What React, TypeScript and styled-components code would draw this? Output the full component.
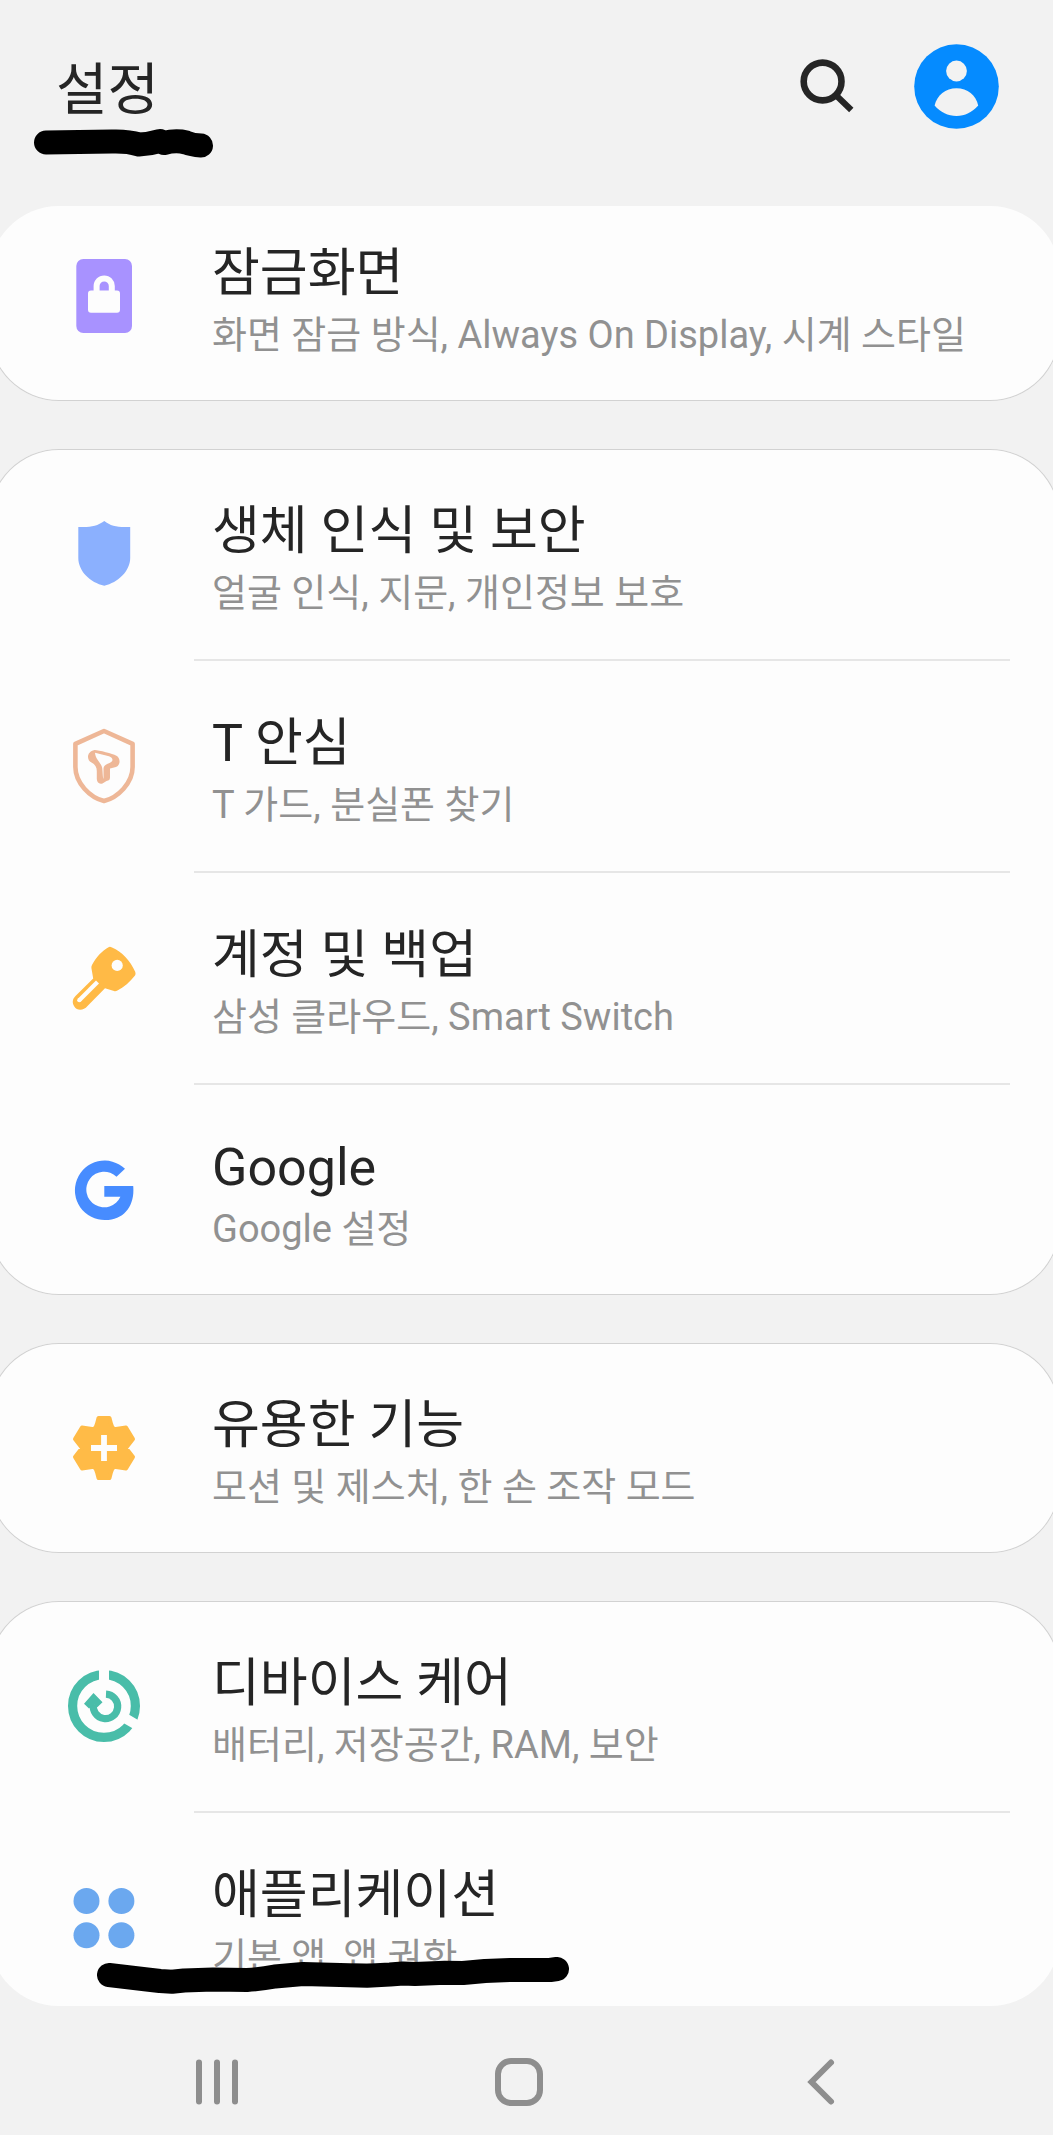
import React from 'react';
import styled, { createGlobalStyle, css } from 'styled-components';

const colors = {
  page: '#f2f2f2',
  card: '#fdfdfd',
  outline: '#d2d2d2',
  divider: '#e6e6e6',
  title: '#252525',
  summary: '#919191',
  nav: '#8e8e8e',
};

const GlobalStyle = createGlobalStyle`
  *, *::before, *::after { box-sizing: border-box; }
  body {
    margin: 0;
    background: ${colors.page};
    color: ${colors.title};
    font-family: Roboto, "Noto Sans CJK KR", sans-serif;
  }
`;

const Screen = styled.div`
  display: flex;
  flex-direction: column;
  height: 100vh;
  overflow: hidden;
`;

const Header = styled.header`
  position: relative;
  flex: none;
  display: flex;
  align-items: center;
  gap: 54px;
  height: 206px;
  padding: 0 54px 34px 56px;
`;

const Heading = styled.h1`
  flex: 1;
  margin: 0;
  padding-top: 8px;
  font-size: 56px;
  line-height: 64px;
  font-weight: 400;
`;

const IconButton = styled.button<{ $size: number }>`
  display: block;
  width: ${({ $size }) => $size}px;
  height: ${({ $size }) => $size}px;
  padding: 0;
  border: 0;
  border-radius: 50%;
  background: none;
  cursor: pointer;

  svg {
    display: block;
    width: 100%;
    height: 100%;
  }
`;

const ListViewport = styled.main`
  flex: 1;
  min-height: 0;
  margin: 0 -7px 0 -11px;
  border-radius: 70px;
  overflow: hidden;
`;

const Groups = styled.div`
  display: flex;
  flex-direction: column;
  gap: 48px;
  margin-top: -15px;
`;

const Card = styled.ul`
  flex: none;
  margin: 0;
  padding: 0;
  list-style: none;
  border-radius: 70px;
  background: ${colors.card};
  box-shadow: inset 0 0 0 1px ${colors.outline};
`;

const Item = styled.li`
  position: relative;

  &:not(:last-child)::after {
    content: '';
    display: block;
    height: 2px;
    margin: 0 50px 0 205px;
    background: ${colors.divider};
  }
`;

const ItemLink = styled.a`
  display: flex;
  align-items: center;
  gap: 68px;
  height: 210px;
  padding: 0 50px 0 75px;
  color: inherit;
  text-decoration: none;

  svg {
    flex: none;
    width: 80px;
    height: 80px;
  }
`;

const Labels = styled.span`
  display: flex;
  flex-direction: column;
  min-width: 0;
  padding-top: 14px;
  white-space: nowrap;
`;

const ItemTitle = styled.span`
  font-size: 52px;
  line-height: 64px;
`;

const ItemSummary = styled.span`
  color: ${colors.summary};
  font-size: 38px;
  line-height: 58px;
`;

const NavBar = styled.nav`
  flex: none;
  display: flex;
  height: 129px;
  padding: 22px 81px 0 66px;
`;

const NavButton = styled.button`
  flex: 1;
  display: flex;
  align-items: center;
  justify-content: center;
  padding: 0;
  border: 0;
  background: none;
  color: ${colors.nav};
  cursor: pointer;

  svg {
    width: 56px;
    height: 56px;
  }
`;

const strokeBase = css`
  position: absolute;
  pointer-events: none;
  fill: none;
  stroke: #000;
  stroke-width: 24px;
  stroke-linecap: round;
  stroke-linejoin: round;
`;

const HeadingMarker = styled.svg`
  ${strokeBase}
  left: 34px;
  top: 128px;
  width: 180px;
  height: 32px;
`;

const ItemMarker = styled.svg`
  ${strokeBase}
  left: 108px;
  top: 144px;
  width: 474px;
  height: 40px;
`;

const SearchIcon = () => (
  <svg viewBox="0 0 64 64" fill="none" stroke="#252525" aria-hidden="true">
    <circle cx="26.6" cy="27.5" r="18.9" strokeWidth="6.6" />
    <path d="M40 41.2 L55.3 56" strokeWidth="6.2" />
  </svg>
);

const AvatarIcon = () => (
  <svg viewBox="0 0 85 85" aria-hidden="true">
    <circle cx="42.5" cy="42.5" r="42.3" fill="#058bff" />
    <circle cx="42.5" cy="27" r="10.4" fill="#f2f2f2" />
    <path
      d="M20.6 61.6 C23 51 31.5 44.3 42.5 44.3 C53.5 44.3 62 51 64.2 61.6 C58 68.5 51 72 42.5 72 C34 72 26.5 68.5 20.6 61.6 Z"
      fill="#f2f2f2"
    />
  </svg>
);

const LockIcon = () => (
  <svg viewBox="0 0 80 80" aria-hidden="true">
    <rect x="12.3" y="3" width="55.7" height="74" rx="7" fill="#a892ff" />
    <rect x="24" y="34.5" width="32" height="22.3" rx="3" fill="#fdfdfd" />
    <path d="M32.6 37 V30 a7.6 7.6 0 0 1 15.2 0 V37" fill="none" stroke="#fdfdfd" strokeWidth="6" />
  </svg>
);

const ShieldIcon = () => (
  <svg viewBox="0 0 80 80" aria-hidden="true">
    <path
      d="M40.3 7 C33 12.5 25 13.6 14.3 12.9 V44 C14.3 57 26 68.5 40.3 71.8 C54 68.5 66.2 57 66.2 44 V12.9 C55 13.6 47 12.5 40.3 7 Z"
      fill="#8bb0fe"
    />
  </svg>
);

const TShieldIcon = () => (
  <svg viewBox="0 0 80 80" aria-hidden="true">
    <path
      d="M40 5 L68.6 17.8 V41 C68.6 57 54 71.5 40 75 C26 71.5 11.4 57 11.4 41 V17.8 Z"
      fill="none"
      stroke="#eeb797"
      strokeWidth="4.6"
      strokeLinejoin="round"
    />
    <path
      d="M30.5 24 C34 23.8 49 28 52 29.5 C57 32 56.5 39.5 52 41 L46 42.5 V51 C46 54 45 54.5 42.5 55 L38.5 57.5 C34.5 58.5 33 56 32.8 53 V45 C32.8 41 31 38.5 27.5 36.5 C22 33.5 23 25.5 30.5 24 Z"
      fill="#eeb797"
    />
    <path
      d="M31 26.8 L45 30.2 C49 31.5 50 35 45.5 37 C40 39 39.5 40.5 39.5 44 V53 C38.6 51 38.8 46 38.2 42 C37.2 36.5 31.5 34 31 26.8 Z"
      fill="#fdfdfd"
    />
  </svg>
);

const KeyIcon = () => (
  <svg viewBox="0 0 80 80" aria-hidden="true">
    <path
      d="M44.5 9.2 Q46 8.4 48 9.5 C58 14 66 22 71.3 34 Q72 36 71 37.5 C66 44 60 49 53 52.7 Q51.5 53.5 50 53 L41 50.3 L23.5 68 C19.5 73 13 73 10.3 68.5 C7.8 64.5 8.5 61 11.5 58 L29.2 40.5 L27.4 30 Q27.2 28.5 28 27 C32 19 38 13 44.5 9.2 Z"
      fill="#ffba46"
    />
    <circle cx="53.2" cy="27.4" r="5.6" fill="#fdfdfd" />
    <path d="M15.3 62.2 L33.5 44" stroke="#fdfdfd" strokeWidth="4.2" />
    <circle cx="15.3" cy="62.2" r="2.1" fill="#fdfdfd" />
  </svg>
);

const GoogleIcon = () => (
  <svg viewBox="0 0 80 80" aria-hidden="true">
    <path
      d="M61 18.7 L52.5 26.7 A17.8 17.8 0 1 0 56.4 46.7 H40.3 V36 H69.2 C71 55 60.5 70 41.3 70 A29.7 29.7 0 1 1 61 18.7 Z"
      fill="#478cff"
    />
  </svg>
);

const GearIcon = () => (
  <svg viewBox="0 0 80 80" aria-hidden="true">
    <path
      d="M34.5 10 H45.5 C47 16 48 22 52 21 L62 19.5 L69 31 L62 40 L69 49 L62 60.5 L52 59 C48 58 47 64 45.5 70 H34.5 C33 64 32 58 28 59 L18 60.5 L11 49 L18 40 L11 31 L18 19.5 L28 21 C32 22 33 16 34.5 10 Z"
      fill="#ffbb47"
      stroke="#ffbb47"
      strokeWidth="4"
      strokeLinejoin="round"
    />
    <path d="M27 40 H53 M40 27 V53" stroke="#fdfdfd" strokeWidth="5.8" />
  </svg>
);

const DeviceCareIcon = () => (
  <svg viewBox="0 0 80 80" fill="none" aria-hidden="true">
    <circle cx="40" cy="40" r="31.4" stroke="#49bda9" strokeWidth="9.2" />
    <path d="M40 16 V0 M58 50.4 L78 62" stroke="#fdfdfd" strokeWidth="10" />
    <path d="M42 28.2 A12.2 12.2 0 1 1 29.5 38" stroke="#49bda9" strokeWidth="7.2" />
    <path d="M20 37.7 L29.5 27 L38.5 36.3 L33.3 41.3 L30 38.5 L25 42.5 Z" fill="#49bda9" />
  </svg>
);

const AppsIcon = () => (
  <svg viewBox="0 0 80 80" fill="#6ba8ef" aria-hidden="true">
    <circle cx="22.5" cy="23" r="13" />
    <circle cx="57.4" cy="23" r="13" />
    <circle cx="22.5" cy="57.3" r="13" />
    <circle cx="57.4" cy="57.3" r="13" />
  </svg>
);

interface Entry {
  id: string;
  title: string;
  summary: string;
  icon: React.ReactNode;
  marked?: boolean;
}

const groups: Entry[][] = [
  [
    {
      id: 'lock',
      title: '잠금화면',
      summary: '화면 잠금 방식, Always On Display, 시계 스타일',
      icon: <LockIcon />,
    },
  ],
  [
    { id: 'security', title: '생체 인식 및 보안', summary: '얼굴 인식, 지문, 개인정보 보호', icon: <ShieldIcon /> },
    { id: 't-safe', title: 'T 안심', summary: 'T 가드, 분실폰 찾기', icon: <TShieldIcon /> },
    { id: 'accounts', title: '계정 및 백업', summary: '삼성 클라우드, Smart Switch', icon: <KeyIcon /> },
    { id: 'google', title: 'Google', summary: 'Google 설정', icon: <GoogleIcon /> },
  ],
  [{ id: 'features', title: '유용한 기능', summary: '모션 및 제스처, 한 손 조작 모드', icon: <GearIcon /> }],
  [
    { id: 'care', title: '디바이스 케어', summary: '배터리, 저장공간, RAM, 보안', icon: <DeviceCareIcon /> },
    { id: 'apps', title: '애플리케이션', summary: '기본 앱, 앱 권한', icon: <AppsIcon />, marked: true },
  ],
];

export default function App() {
  return (
    <Screen>
      <GlobalStyle />
      <Header>
        <Heading>설정</Heading>
        <IconButton type="button" $size={64} aria-label="검색">
          <SearchIcon />
        </IconButton>
        <IconButton type="button" $size={85} aria-label="내 프로필">
          <AvatarIcon />
        </IconButton>
        <HeadingMarker viewBox="34 128 180 32" aria-hidden="true">
          <path d="M46 142.5 L112 141.5 Q128 141 139 144.5 Q150 144 160 141 L164 143 Q176 140 186 142.5 Q192 145 201 145.5" />
        </HeadingMarker>
      </Header>

      <ListViewport>
        <Groups>
          {groups.map((group) => (
            <Card key={group[0].id}>
              {group.map((entry) => (
                <Item key={entry.id}>
                  <ItemLink href={`#${entry.id}`}>
                    {entry.icon}
                    <Labels>
                      <ItemTitle>{entry.title}</ItemTitle>
                      <ItemSummary>{entry.summary}</ItemSummary>
                    </Labels>
                  </ItemLink>
                  {entry.marked && (
                    <ItemMarker viewBox="97 1957 474 40" aria-hidden="true">
                      <path d="M109 1975 L147 1979.5 L160 1981 L172 1981.7 L184 1980.5 L213 1979.5 L247 1980 Q262 1979 275 1976.5 L303 1974 L340 1975 L367 1975.7 L390 1974.5 L403 1973.5 L415 1974 L445 1972.7 L463 1973 L485 1971 L510 1970 H550 L557 1969" />
                    </ItemMarker>
                  )}
                </Item>
              ))}
            </Card>
          ))}
        </Groups>
      </ListViewport>

      <NavBar aria-label="시스템 탐색">
        <NavButton type="button" aria-label="최근 앱">
          <svg viewBox="0 0 56 56" fill="none" stroke="currentColor" strokeWidth="6" strokeLinecap="round" aria-hidden="true">
            <path d="M10 8.5 V47.5 M28 8.5 V47.5 M46 8.5 V47.5" />
          </svg>
        </NavButton>
        <NavButton type="button" aria-label="홈">
          <svg viewBox="0 0 56 56" fill="none" stroke="currentColor" strokeWidth="6" aria-hidden="true">
            <rect x="7" y="7" width="42" height="42" rx="13" />
          </svg>
        </NavButton>
        <NavButton type="button" aria-label="뒤로">
          <svg viewBox="0 0 56 56" fill="none" stroke="currentColor" strokeWidth="6" strokeLinecap="round" aria-hidden="true">
            <path d="M38 8.5 L18.5 28 L38 47.5" />
          </svg>
        </NavButton>
      </NavBar>
    </Screen>
  );
}
